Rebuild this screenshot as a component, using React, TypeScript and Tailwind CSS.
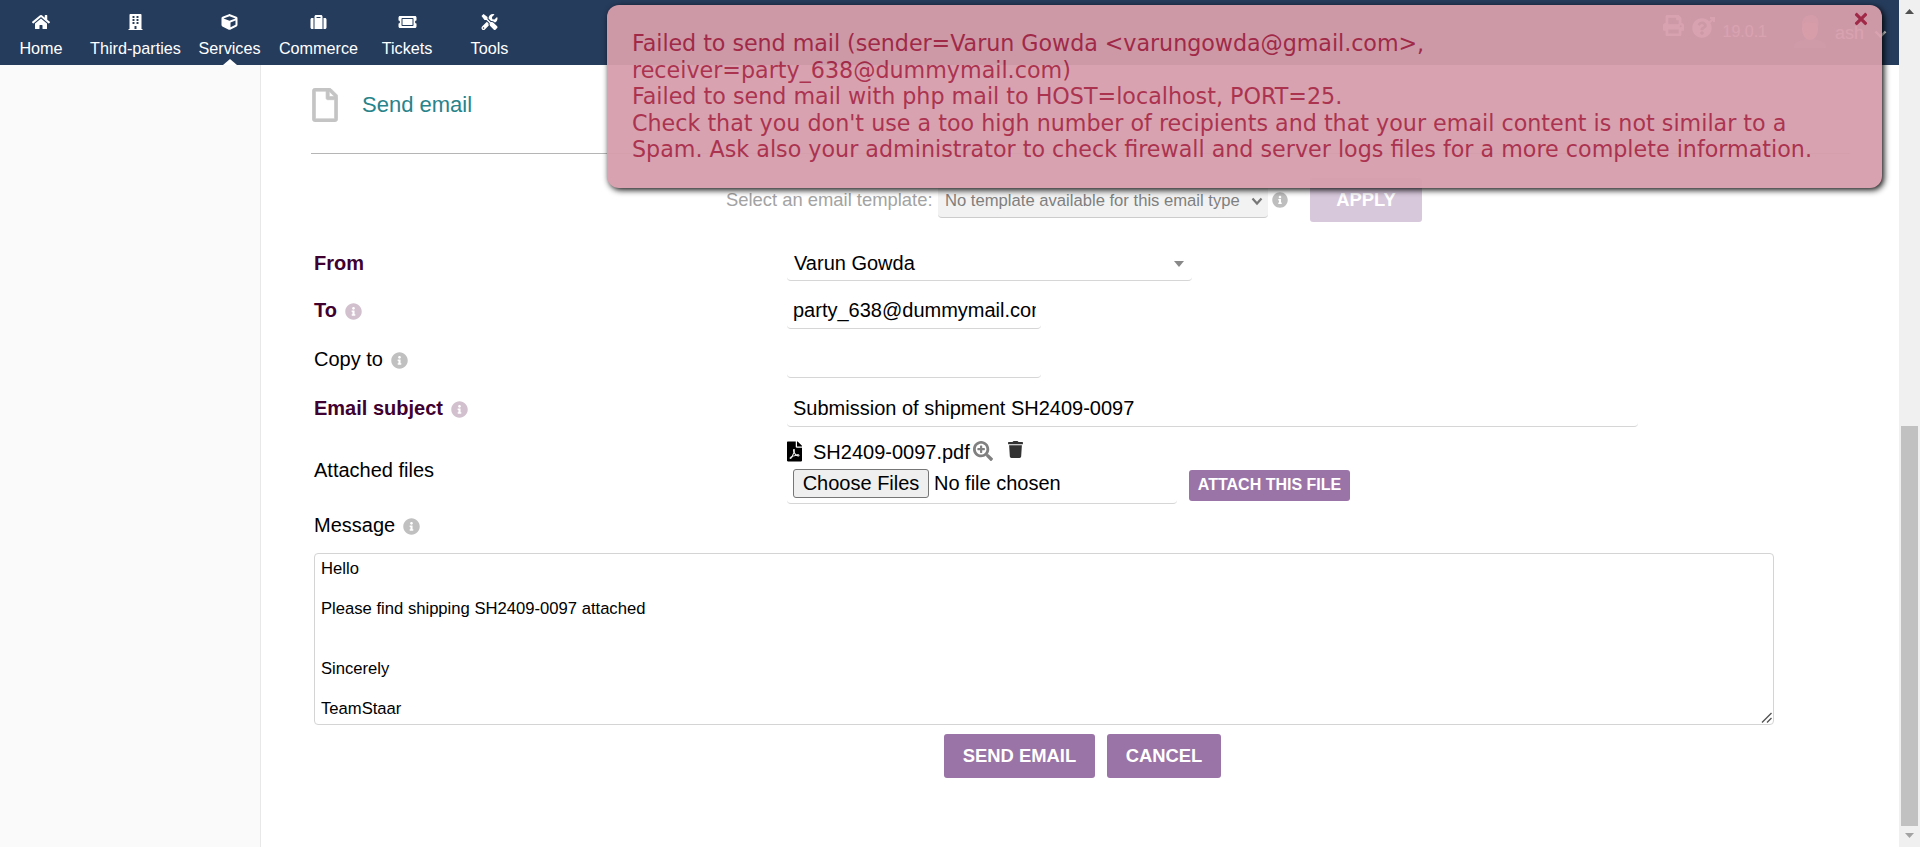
import type { ReactNode } from "react";
import {
  FaBuilding,
  FaCube,
  FaFilePdf,
  FaHome,
  FaInfoCircle,
  FaPrint,
  FaQuestionCircle,
  FaRegFile,
  FaSearchPlus,
  FaSuitcase,
  FaTicketAlt,
  FaTimes,
  FaTools,
  FaTrash,
} from "react-icons/fa";

const menu = [
  { label: "Home", icon: FaHome, width: "w-[82px]", iconWidth: "w-[18px]" },
  { label: "Third-parties", icon: FaBuilding, width: "w-[107px]", iconWidth: "w-[15px]" },
  { label: "Services", icon: FaCube, width: "w-[81px]", iconWidth: "w-[17px]", active: true },
  { label: "Commerce", icon: FaSuitcase, width: "w-[97px]", iconWidth: "w-[17px]" },
  { label: "Tickets", icon: FaTicketAlt, width: "w-[80px]", iconWidth: "w-[19px]" },
  { label: "Tools", icon: FaTools, width: "w-[85px]", iconWidth: "w-[17px]" },
];

function TopBar() {
  return (
    <header className="flex h-[65px] shrink-0 justify-between bg-[#263c5c] text-white">
      <nav className="flex">
        {menu.map(({ label, icon: Icon, width, iconWidth, active }) => (
          <a key={label} className={`relative flex flex-col items-center pt-[14px] ${width}`}>
            <Icon className={`h-[16px] ${iconWidth}`} />
            <span className="mt-[9px] text-[16.2px] leading-[19px]">{label}</span>
            {active && (
              <svg className="absolute bottom-0 h-[6px] w-[14px]" viewBox="0 0 14 6">
                <path d="M0 6 7 0l7 6z" fill="#fff" />
              </svg>
            )}
          </a>
        ))}
      </nav>
      <div className="flex items-start pr-[12px]">
        <FaPrint className="mt-[15px] size-[21px]" />
        <div className="ml-[8px] mt-[17px] flex">
          <FaQuestionCircle className="mt-[1px] size-[20px]" />
          <svg className="-ml-[4px] size-[7px]" viewBox="0 0 7 7">
            <path d="M1 6 6 1M2 1h4v4" fill="none" stroke="#fff" strokeWidth="2" />
          </svg>
        </div>
        <span className="ml-[7px] mt-[22px] text-[16px] leading-[19px]">19.0.1</span>
        <svg className="ml-[27px] mt-[14px] h-[37px] w-[32px]" viewBox="0 0 32 37">
          <path d="M0 34c0-5 4-7 10-8l3-2h6l3 2c6 1 10 3 10 8z" fill="#56637c" />
          <ellipse cx="16" cy="15" rx="8" ry="11" fill="#e89a84" />
          <path d="M8 13C7 4 12 1 17 1s9 4 7 12l-2-4c-4 0-9-1-12 0z" fill="#a87868" />
        </svg>
        <span className="ml-[9px] mt-[22px] text-[18px] leading-[22px]">ash</span>
        <svg className="ml-[10px] mt-[30px] h-[9px] w-[13px]" viewBox="0 0 13 9">
          <path d="M1.5 1.5 6.5 6.5l5-5" fill="none" stroke="#fff" strokeWidth="2.4" />
        </svg>
      </div>
    </header>
  );
}

function Row({
  label,
  height,
  bold,
  info,
  children,
}: {
  label: string;
  height: string;
  bold?: boolean;
  info?: boolean;
  children?: ReactNode;
}) {
  return (
    <div className={`flex items-start ${height}`}>
      <div className={`flex h-full w-[473px] shrink-0 items-center ${bold ? "font-bold text-[#400030]" : ""}`}>
        <span>{label}</span>
        {info && (
          <FaInfoCircle className={`ml-[8px] mt-[3px] size-[17px] ${bold ? "text-[#d2c0ce]" : "text-[#c0c0c0]"}`} />
        )}
      </div>
      {children}
    </div>
  );
}

function TemplateBar() {
  return (
    <div className="ml-[415px] mt-[24px] flex h-[44px] items-start">
      <span className="mt-[11px] w-[212px] whitespace-nowrap text-[18.4px] leading-[22px] text-[#a3a3a3]">
        Select an email template:
      </span>
      <div className="mt-[6px] flex h-[34px] w-[330px] justify-between rounded-[4px] border-b border-[#ccc] bg-[#f2f2f2] pl-[7px] pr-[5px] text-[16.64px] leading-[33px] text-[#7f7f7f]">
        <span className="whitespace-nowrap">No template available for this email type</span>
        <svg className="mt-[13px] h-[9px] w-[12px]" viewBox="0 0 12 9">
          <path d="m1.500 1.500 4.500 5 4.500-5" fill="none" stroke="#777" strokeWidth="2.2" />
        </svg>
      </div>
      <FaInfoCircle className="ml-[4px] mt-[14px] size-[16px] text-[#bebebe]" />
      <button className="ml-[22px] h-[44px] w-[112px] rounded-[3px] bg-[#d8c8dc] text-[18.4px] font-bold leading-[42px] text-white">
        APPLY
      </button>
    </div>
  );
}

function AttachedFiles() {
  return (
    <div className="flex flex-col">
      <div className="mt-[9px] flex h-[21px]">
        <FaFilePdf className="h-[21px] w-[15px] text-black" />
        <span className="ml-[11px] leading-[22px]">SH2409-0097.pdf</span>
        <FaSearchPlus className="ml-[3px] size-[20px] text-[#808080]" />
        <FaTrash className="ml-[15px] h-[17px] w-[15px] text-[#333]" />
      </div>
      <div className="mt-[5px] flex items-start">
        <div className="flex h-[37px] w-[390px] items-start rounded-[4px] border-b border-[#d6d6d6] pl-[6px] pt-[2px]">
          <button className="flex h-[29px] w-[136px] justify-center rounded-[3px] border border-[#767676] bg-[#efefef] leading-[26px]">
            Choose Files
          </button>
          <span className="ml-[5px] leading-[28px]">No file chosen</span>
        </div>
        <button className="ml-[12px] mt-[3px] flex h-[31px] w-[161px] justify-center rounded-[3px] bg-[#9b74a7] text-[16px] font-bold leading-[29px] text-white">
          ATTACH THIS FILE
        </button>
      </div>
    </div>
  );
}

function ErrorNotice() {
  return (
    <div
      role="alert"
      className="absolute left-[607px] top-[5px] h-[183px] w-[1275px] rounded-[12px] bg-[#d79eac] pl-[25px] pt-[25px] font-['DejaVu_Sans',sans-serif] text-[22.22px] leading-[26.5px] text-[#a72947] opacity-95 shadow-[2px_2px_6px_#000]"
    >
      <FaTimes className="absolute right-[12px] top-[5px] size-[18px]" />
      <p className="whitespace-nowrap tracking-[-0.05px]">
        Failed to send mail (sender=Varun Gowda &lt;varungowda@gmail.com&gt;,
      </p>
      <p className="whitespace-nowrap">receiver=party_638@dummymail.com)</p>
      <p className="whitespace-nowrap">Failed to send mail with php mail to HOST=localhost, PORT=25.</p>
      <p className="whitespace-nowrap">
        Check that you don't use a too high number of recipients and that your email content is not similar to a
      </p>
      <p className="whitespace-nowrap">
        Spam. Ask also your administrator to check firewall and server logs files for a more complete information.
      </p>
    </div>
  );
}

function Scrollbar() {
  return (
    <div className="flex w-[21px] shrink-0 flex-col items-center bg-[#f0f0f0]">
      <svg className="mt-[9px] h-[5px] w-[9px]" viewBox="0 0 9 5">
        <path d="M0 5 4.5 0 9 5z" fill="#505050" />
      </svg>
      <div className="mt-[412px] h-[400px] w-[17px] bg-[#c1c1c1]" />
      <svg className="mt-[7px] h-[5px] w-[9px]" viewBox="0 0 9 5">
        <path d="M0 0h9L4.5 5z" fill="#a3a3a3" />
      </svg>
    </div>
  );
}

export default function App() {
  return (
    <div className="relative flex h-[847px] w-[1920px] overflow-hidden bg-white font-['Liberation_Sans',Arial,sans-serif] text-[20px] leading-[24px] text-black">
      <div className="flex min-w-0 flex-1 flex-col">
        <TopBar />
        <div className="flex flex-1">
          <aside className="w-[261px] shrink-0 border-r border-[#e8e8e8] bg-[#fafafa]" />
          <main className="flex-1 pl-[50px]">
            <div className="flex h-[89px] w-[1539px] border-b border-[#b5b5b5] pl-[1px] pt-[23px]">
              <FaRegFile className="h-[34px] w-[26px] stroke-[#c4c4c4] text-[#c4c4c4] [stroke-width:10px]" />
              <h1 className="ml-[24px] mt-[4px] text-[22px] leading-[26px] text-[#28838a]">Send email</h1>
            </div>
            <TemplateBar />
            <div className="ml-[3px] mt-[18px]">
              <Row label="From" height="h-[46px]" bold>
                <div className="mt-[5px] flex h-[36px] w-[405px] justify-between rounded-[4px] border-b border-[#d6d6d6] pl-[7px] pr-[8px] leading-[36px]">
                  <span>Varun Gowda</span>
                  <svg className="mt-[16px] h-[6px] w-[10px]" viewBox="0 0 10 6">
                    <path d="M0 0h10L5 6z" fill="#888" />
                  </svg>
                </div>
              </Row>
              <Row label="To" height="h-[48px]" bold info>
                <div className="mt-[6px] h-[37px] w-[254px] rounded-[4px] border-b border-[#d6d6d6] pl-[6px] pr-[5px] leading-[36px]">
                  <div className="overflow-hidden whitespace-nowrap">party_638@dummymail.com</div>
                </div>
              </Row>
              <Row label="Copy to" height="h-[50px]" info>
                <div className="mt-[7px] h-[37px] w-[254px] rounded-[4px] border-b border-[#d6d6d6]" />
              </Row>
              <Row label="Email subject" height="h-[48px]" bold info>
                <div className="mt-[6px] h-[37px] w-[851px] rounded-[4px] border-b border-[#d6d6d6] px-[6px] leading-[36px]">
                  Submission of shipment SH2409-0097
                </div>
              </Row>
              <Row label="Attached files" height="h-[76px]">
                <AttachedFiles />
              </Row>
              <Row label="Message" height="h-[34px]" info />
              <div className="mt-[11px] flex h-[172px] w-[1460px] items-end justify-between rounded-[4px] border border-[#d4d4d4] pl-[6px]">
                <div className="h-full whitespace-pre pt-[5px] text-[16.64px] leading-[20px]">
                  {"Hello\n\nPlease find shipping SH2409-0097 attached\n\n\nSincerely\n\nTeamStaar"}
                </div>
                <svg className="mb-[1px] mr-[1px] size-[11px]" viewBox="0 0 11 11">
                  <path d="M1 10.5 10.5 1M6 10.5l4.500-4.500" fill="none" stroke="#555" strokeWidth="1.4" />
                </svg>
              </div>
            </div>
            <div className="ml-[633px] mt-[9px] flex gap-[12px] text-[18.4px] font-bold leading-[42px] text-white">
              <button className="h-[44px] w-[151px] rounded-[3px] bg-[#9b74a7]">SEND EMAIL</button>
              <button className="h-[44px] w-[114px] rounded-[3px] bg-[#9b74a7]">CANCEL</button>
            </div>
          </main>
        </div>
      </div>
      <Scrollbar />
      <ErrorNotice />
    </div>
  );
}
